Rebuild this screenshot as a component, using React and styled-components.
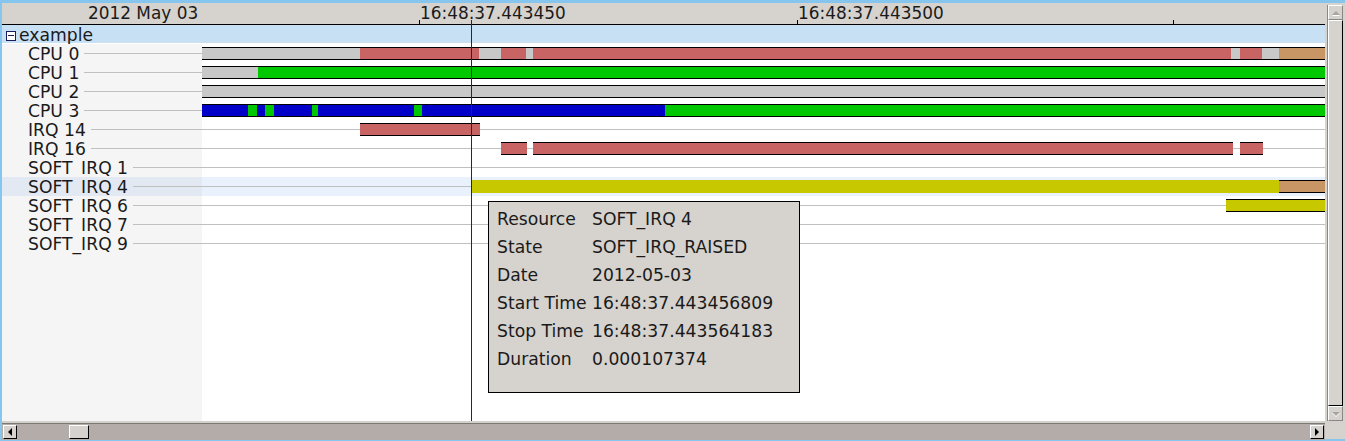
import React from 'react';
import styled, { createGlobalStyle } from 'styled-components';

const GlobalStyle = createGlobalStyle`
  html, body { margin: 0; padding: 0; background: #ffffff; }
  body {
    font-family: "DejaVu Sans", Verdana, sans-serif;
    font-size: 17.2px;
    color: #1a1a1a;
  }
  #root { width: 1345px; height: 441px; overflow: hidden; }
`;

const COLORS = {
  gray: '#c8c8c8',
  red: '#c86464',
  green: '#00c800',
  blue: '#0000c8',
  yellow: '#c8c800',
  tan: '#c89664',
};

const TRACK_X = 202;

const rows = [
  { name: 'CPU 0', segs: [[202, 360, 'gray'], [360, 479, 'red'], [479, 501, 'gray'], [501, 526, 'red'], [526, 533, 'gray'], [533, 1231, 'red'], [1231, 1240, 'gray'], [1240, 1262, 'red'], [1262, 1279, 'gray'], [1279, 1325, 'tan']] },
  { name: 'CPU 1', segs: [[202, 258, 'gray'], [258, 1325, 'green']] },
  { name: 'CPU 2', segs: [[202, 1325, 'gray']] },
  { name: 'CPU 3', segs: [[202, 248, 'blue'], [248, 257, 'green'], [257, 265, 'blue'], [265, 274, 'green'], [274, 312, 'blue'], [312, 318, 'green'], [318, 414, 'blue'], [414, 422, 'green'], [422, 665, 'blue'], [665, 1325, 'green']] },
  { name: 'IRQ 14', segs: [[360, 480, 'red']] },
  { name: 'IRQ 16', segs: [[501, 527, 'red'], [533, 1233, 'red'], [1240, 1263, 'red']] },
  { name: 'SOFT_IRQ 1', segs: [] },
  { name: 'SOFT_IRQ 4', hl: true, segs: [[471, 1279, 'yellow', true], [1279, 1325, 'tan']] },
  { name: 'SOFT_IRQ 6', segs: [[1226, 1325, 'yellow']] },
  { name: 'SOFT_IRQ 7', segs: [] },
  { name: 'SOFT_IRQ 9', segs: [] },
];

const ticks = [
  { x: 419, label: '16:48:37.443450' },
  { x: 797, label: '16:48:37.443500' },
  { x: 1173, label: null },
];

const details = [
  ['Resource', 'SOFT_IRQ 4'],
  ['State', 'SOFT_IRQ_RAISED'],
  ['Date', '2012-05-03'],
  ['Start Time', '16:48:37.443456809'],
  ['Stop Time', '16:48:37.443564183'],
  ['Duration', '0.000107374'],
];

const Window = styled.div`
  width: 1345px;
  height: 441px;
  box-sizing: border-box;
  border-top: 3px solid #86c5ee;
  border-left: 2px solid #86c5ee;
  border-bottom: 2px solid #86c5ee;
  background: #d6d2ce;
  display: flex;
  flex-direction: column;
`;

const Body = styled.div`
  flex: 1;
  display: flex;
  min-height: 0;
`;

const Viewport = styled.div`
  position: relative;
  width: 1323px;
  display: flex;
  flex-direction: column;
  overflow: hidden;
`;

const Header = styled.div`
  position: relative;
  height: 22px;
  box-sizing: border-box;
  border-bottom: 1px solid #000;
  background: #d6d2ce;
  font-size: 16.9px;
  line-height: 21px;
  padding-left: 86px;
  white-space: nowrap;
`;

const Tick = styled.div`
  position: absolute;
  bottom: 0;
  width: 1px;
  height: 4px;
  background: #000;
`;

const TickLabel = styled.span`
  position: absolute;
  top: 0;
  line-height: 21px;
`;

const GroupRow = styled.div`
  height: 19px;
  box-sizing: border-box;
  padding-top: 3px;
  border-bottom: 1px solid #fff;
  background: #c8e0f4;
  display: flex;
  align-items: center;
  gap: 3px;
  padding-left: 4px;
  line-height: 15px;
`;

const Collapse = styled.span`
  position: relative;
  width: 10px;
  height: 10px;
  box-sizing: border-box;
  border: 1px solid #1c1c5c;
  background: #fff;
  &::after {
    content: '';
    position: absolute;
    left: 1px;
    right: 1px;
    top: 3px;
    height: 1px;
    background: #1c1c5c;
  }
`;

const Row = styled.div`
  display: grid;
  grid-template-columns: 200px 1fr;
  height: 19px;
  flex-shrink: 0;
`;

const LabelCell = styled.div`
  display: flex;
  align-items: center;
  gap: 5px;
  padding-left: 26px;
  height: 19px;
  white-space: nowrap;
  overflow: ${(p) => (p.$last ? 'visible' : 'hidden')};
  background: ${(p) => (p.$hl ? '#e2e9f3' : '#f5f5f5')};
  &::after {
    content: '';
    flex: 1;
    height: 1px;
    background: #c0c0c0;
  }
`;

const LabelText = styled.span`
  line-height: 19px;
  position: relative;
  top: 1px;
`;

const TrackCell = styled.div`
  position: relative;
  background: ${(p) => (p.$hl ? '#e9f2fc' : '#ffffff')};
  &::before {
    content: '';
    position: absolute;
    left: 0;
    right: 0;
    top: 9px;
    height: 1px;
    background: #c0c0c0;
  }
`;

const Bar = styled.div`
  position: absolute;
  top: 3px;
  height: 13px;
  box-sizing: border-box;
  background: ${(p) => COLORS[p.$color]};
  border-top: 1px solid ${(p) => (p.$plain ? 'transparent' : '#000')};
  border-bottom: 1px solid ${(p) => (p.$plain ? 'transparent' : '#000')};
`;

const Filler = styled.div`
  flex: 1;
  display: grid;
  grid-template-columns: 200px 1fr;
`;

const FillerLabel = styled.div`
  background: #f5f5f5;
`;

const FillerTrack = styled.div`
  background: #ffffff;
`;

const Cursor = styled.div`
  position: absolute;
  left: 469px;
  top: 17px;
  bottom: 0;
  width: 1px;
  background: #1818b0;
  z-index: 2;
`;

const Tooltip = styled.div`
  position: absolute;
  left: 486px;
  top: 198px;
  width: 312px;
  height: 192px;
  box-sizing: border-box;
  border: 1px solid #000;
  background: #d6d2ce;
  padding: 3px 8px 0 8px;
  display: grid;
  grid-template-columns: 95px auto;
  align-content: start;
  line-height: 28px;
  z-index: 3;
  white-space: nowrap;
`;

const VScroll = styled.div`
  width: 20px;
  box-sizing: border-box;
  padding: 2px 3px 0 2px;
  background: #d6d2ce;
  display: flex;
`;

const VTrack = styled.div`
  flex: 1;
  display: flex;
  flex-direction: column;
  background: #b4aca8;
  border-left: 1px solid #8a8682;
`;

const ScrollButton = styled.div`
  position: relative;
  flex-shrink: 0;
  width: ${(p) => p.$w}px;
  height: ${(p) => p.$h}px;
  box-sizing: border-box;
  background: #d6d2ce;
  border-top: 1px solid #ffffff;
  border-left: 1px solid #ffffff;
  border-right: 1px solid ${(p) => (p.$disabled ? '#8a8682' : '#000')};
  border-bottom: 1px solid ${(p) => (p.$disabled ? '#8a8682' : '#000')};
  display: flex;
  align-items: center;
  justify-content: center;
  ${(p) => (p.$right ? 'margin-left: auto;' : '')}
`;

const Arrow = styled.span`
  width: 0;
  height: 0;
  border-style: solid;
  ${(p) =>
    p.$dir === 'up'
      ? `border-width: 0 4px 4px 4px; border-color: transparent transparent #a8a4a0 transparent; filter: drop-shadow(0 1px 0 #fff);`
      : p.$dir === 'down'
      ? `border-width: 4px 4px 0 4px; border-color: #a8a4a0 transparent transparent transparent; filter: drop-shadow(0 1px 0 #fff);`
      : p.$dir === 'left'
      ? `border-width: 4px 4px 4px 0; border-color: transparent #000 transparent transparent;`
      : `border-width: 4px 0 4px 4px; border-color: transparent transparent transparent #000;`}
`;

const VThumb = styled.div`
  flex: 1;
  box-sizing: border-box;
  background: #d6d2ce;
  border-top: 1px solid #ffffff;
  border-left: 1px solid #ffffff;
  border-right: 1px solid #000;
  border-bottom: 1px solid #000;
`;

const Bottom = styled.div`
  height: 18px;
  display: flex;
  flex-shrink: 0;
`;

const HScroll = styled.div`
  width: 1323px;
  box-sizing: border-box;
  border-top: 2px solid #d4d0cc;
  display: flex;
  flex-direction: column;
`;

const HTrack = styled.div`
  flex: 1;
  background: #b4aca8;
  border-top: 1px solid #7c7874;
  padding: 1px;
  display: flex;
  align-items: flex-start;
`;

const HThumb = styled.div`
  width: 20px;
  height: 14px;
  margin-left: 52px;
  box-sizing: border-box;
  background: #d6d2ce;
  border-top: 1px solid #ffffff;
  border-left: 1px solid #ffffff;
  border-right: 1px solid #000;
  border-bottom: 1px solid #000;
`;

const Corner = styled.div`
  flex: 1;
  background: #d6d2ce;
`;

export default function App() {
  return (
    <>
      <GlobalStyle />
      <Window>
        <Body>
          <Viewport>
            <Header>
              2012 May 03
              {ticks.map((t) => (
                <React.Fragment key={t.x}>
                  <Tick style={{ left: t.x - 2 }} />
                  {t.label && <TickLabel style={{ left: t.x - 1 }}>{t.label}</TickLabel>}
                </React.Fragment>
              ))}
            </Header>
            <GroupRow>
              <Collapse />
              <span>example</span>
            </GroupRow>
            {rows.map((r, i) => (
              <Row key={r.name}>
                <LabelCell $hl={r.hl} $last={i === rows.length - 1}>
                  <LabelText>{r.name}</LabelText>
                </LabelCell>
                <TrackCell $hl={r.hl}>
                  {r.segs.map(([a, b, c, plain], j) => (
                    <Bar
                      key={j}
                      $color={c}
                      $plain={plain}
                      style={{ left: a - TRACK_X, width: b - a }}
                    />
                  ))}
                </TrackCell>
              </Row>
            ))}
            <Filler>
              <FillerLabel />
              <FillerTrack />
            </Filler>
            <Cursor />
            <Tooltip>
              {details.map(([k, v]) => (
                <React.Fragment key={k}>
                  <span>{k}</span>
                  <span>{v}</span>
                </React.Fragment>
              ))}
            </Tooltip>
          </Viewport>
          <VScroll>
            <VTrack>
              <ScrollButton $w={15} $h={15} $disabled>
                <Arrow $dir="up" />
              </ScrollButton>
              <VThumb />
              <ScrollButton $w={15} $h={15} $disabled>
                <Arrow $dir="down" />
              </ScrollButton>
            </VTrack>
          </VScroll>
        </Body>
        <Bottom>
          <HScroll>
            <HTrack>
              <ScrollButton $w={14} $h={14}>
                <Arrow $dir="left" />
              </ScrollButton>
              <HThumb />
              <ScrollButton $w={14} $h={14} $right>
                <Arrow $dir="right" />
              </ScrollButton>
            </HTrack>
          </HScroll>
          <Corner />
        </Bottom>
      </Window>
    </>
  );
}
